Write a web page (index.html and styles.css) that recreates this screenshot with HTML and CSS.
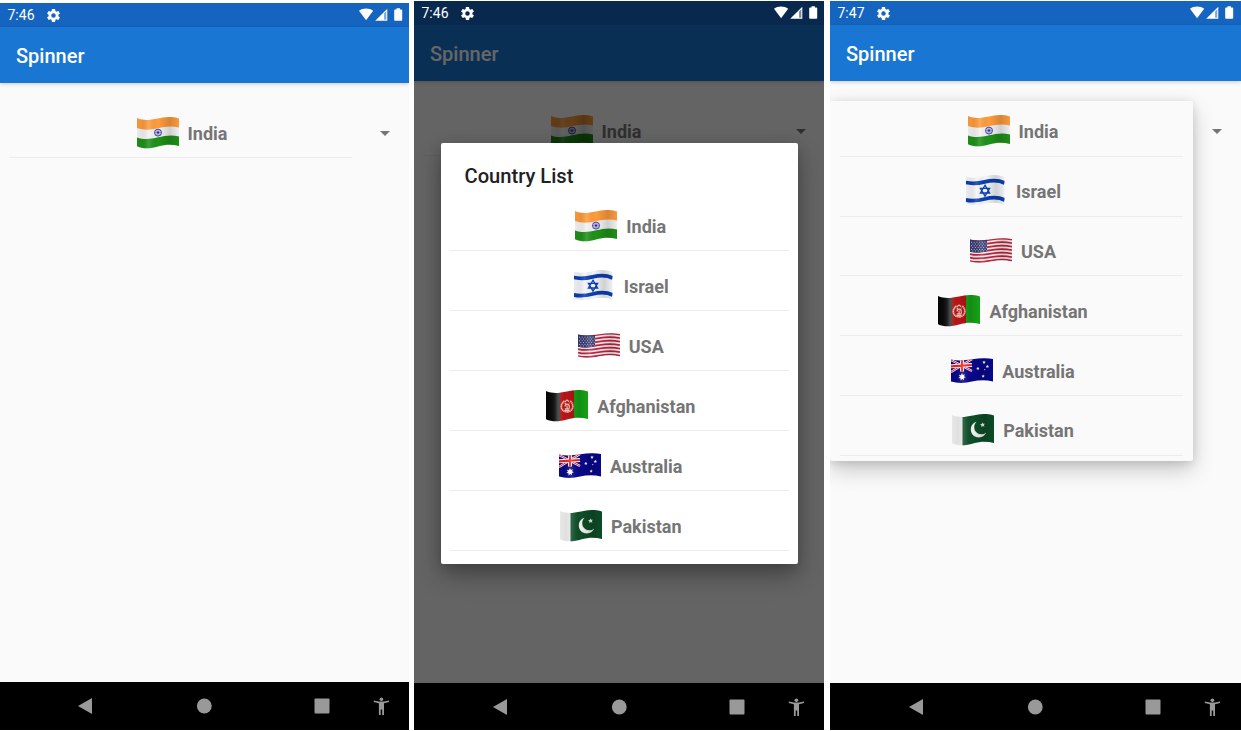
FILE: index.html
```
<!DOCTYPE html>
<html lang="en">
<head>
<meta charset="utf-8">
<title>Spinner</title>
<link rel="stylesheet" href="styles.css">
</head>
<body>
<svg class="defs" width="0" height="0" aria-hidden="true">
  <defs>
    <linearGradient id="shade" x1="0" x2="1" y1="0" y2="0">
      <stop offset="0" stop-color="#000" stop-opacity=".04"/>
      <stop offset=".13" stop-color="#000" stop-opacity=".07"/>
      <stop offset=".28" stop-color="#fff" stop-opacity=".14"/>
      <stop offset=".5" stop-color="#000" stop-opacity="0"/>
      <stop offset=".78" stop-color="#000" stop-opacity=".15"/>
      <stop offset="1" stop-color="#000" stop-opacity=".02"/>
    </linearGradient>
    <linearGradient id="black" x1="0" x2="1" y1="0" y2="0">
      <stop offset="0" stop-color="#050505"/><stop offset=".65" stop-color="#111"/><stop offset="1" stop-color="#444"/>
    </linearGradient>
    <clipPath id="wave"><path d="M0 1C7 4 13 3 21 1.4S36-.8 42 1.4V29C35 27 28 27.5 21 29.4S7 32.4 0 29.2Z"/></clipPath>
    <clipPath id="wave-il"><path d="M0 1.5C7 3.600 13 2.800 19 1.300S33-.8 39 2.600V30C32 27 26 27.5 19 29S6 30.500 0 28.5Z"/></clipPath>
    <clipPath id="wave-us"><path d="M0 1.6C7 3 13 2.600 21 1.300S36-.2 42 1V23.500C35 21.800 28 22 21 23.600S7 25.500 0 23.500Z"/></clipPath>
  </defs>
  <symbol id="in" viewBox="0 0 42 32"><g clip-path="url(#wave)">
    <path fill="#f3f3f3" d="M0 0H42V32H0Z"/>
    <path fill="#ff9c3d" d="M0-2H42V10.500C35 8.500 28 9.500 21 11.200S7 13.500 0 11Z"/>
    <path fill="#1f9118" d="M0 20.500C7 23 14 22 21 20.300S35 17.500 42 19.500V33H0Z"/>
    <circle cx="21" cy="15.600" r="3.500" fill="#e4e4f2" stroke="#34349a" stroke-width=".9"/>
    <path stroke="#34349a" stroke-width=".5" d="M21 12v7.200M17.500 15.600h7M18.500 13.100l5 5M23.500 13.100l-5 5"/>
    <circle cx="21" cy="15.600" r="1" fill="#26268f"/>
    <path fill="url(#shade)" d="M0 0H42V32H0Z"/></g></symbol>
  <symbol id="il" viewBox="-.7 0 42 32"><g clip-path="url(#wave-il)">
    <path fill="#f4f5f8" d="M0 0H42V32H0Z"/>
    <g fill="none" stroke="#0a3fb0"><path stroke-width="3.800" d="M0 7.500C7 9 13 8.300 19 6.800S33 4.800 39 8"/>
    <path stroke-width="3.800" d="M0 24.800C7 26.500 13 25.500 19 24S33 22 39 25"/>
    <path stroke-width="1.300" d="M19.300 10.200l4.600 7.800h-9.200ZM19.300 21.200l-4.600-7.900h9.200Z"/></g>
    <path fill="url(#shade)" d="M0 0H39V32H0Z"/></g></symbol>
  <symbol id="us" viewBox="0 0 42 26"><g clip-path="url(#wave-us)">
    <path fill="#f6eeee" d="M0 0H42V26H0Z"/>
    <g fill="none" stroke="#bd2540" stroke-width="1.700">
      <path d="M0 2C7 4 13 3 21 1.600S36 .3 42 1.600"/><path d="M0 5.500C7 7.500 13 6.500 21 5.100S36 3.800 42 5.100"/>
      <path d="M0 9C7 11 13 10 21 8.600S36 7.300 42 8.600"/><path d="M0 12.500C7 14.500 13 13.500 21 12.100S36 10.800 42 12.100"/>
      <path d="M0 16C7 18 13 17 21 15.600S36 14.300 42 15.600"/><path d="M0 19.500C7 21.500 13 20.500 21 19.100S36 17.800 42 19.100"/>
      <path d="M0 23C7 25 13 24 21 22.600S36 21.300 42 22.600"/></g>
    <path fill="#34376f" d="M0 0H17V13.600C11 15 6 15 0 13.800Z"/>
    <g stroke="#c5c7df" stroke-width="1" stroke-dasharray="1 1.700" fill="none"><path d="M1 4.200H17M2.300 6H17M1 7.800H17M2.300 9.600H17M1 11.400H17M2.300 13H17"/></g>
    <path fill="url(#shade)" d="M0 0H42V32H0Z"/></g></symbol>
  <symbol id="af" viewBox="0 0 42 32"><g clip-path="url(#wave)">
    <path fill="url(#black)" d="M0 0H14V32H0Z"/><path fill="#b51515" d="M14 0H28V32H14Z"/><path fill="#16a516" d="M28 0H42V32H28Z"/>
    <g fill="none" stroke="#efbdb2"><path stroke-width="1.700" stroke-dasharray="1.600 .3" d="M18.500 11C13 15 15 21.700 21 21.800S29 15 24 10.600"/>
    <path stroke-width="1.200" d="M18.800 18.800h4.600M19 16.600c0-3.400 4.300-3.400 4.300 0v2M21.100 15.500v3M19 11.800l2-1.700 2 1.400M18.800 20.300h4.800M18.600 13.300h1.500M22.800 13h1"/></g>
    <path fill="url(#shade)" d="M0 0H42V32H0Z"/></g></symbol>
  <symbol id="au" viewBox="0 0 42 26"><g clip-path="url(#wave-us)">
    <path fill="#08088c" d="M0 0H42V26H0Z"/>
    <path stroke="#fff" stroke-width="2.200" d="M0 2L21 13M0 14L21 1"/><path stroke="#e8283a" stroke-width="1" d="M0 2L21 13M0 14L21 1"/>
    <path stroke="#fff" stroke-width="4" d="M11 0V13.500M0 8.300L21 7"/><path stroke="#ef2525" stroke-width="2.200" d="M11 0V13.500M0 8.300L21 7"/>
    <g fill="#fff"><path d="M11 15l.8 2.100 2.100-.9-.9 2 1.900 1.100-2.100.6.300 2.200-1.900-1.200-1.600 1.500-.1-2.200-2.200-.1 1.700-1.400-1.200-1.900 2.100.4Z"/>
    <path d="M33 2.600l.5 1 1.200.2-.9.900.1 1.100-1-.6-1 .6.200-1.200-.8-.8 1.200-.2ZM27 8.800l.4 1 1.100.2-.8.800.1 1.100-1-.6-1 .6.200-1.200-.8-.7 1.200-.2ZM36.500 6.800l.4 1 1.100.2-.8.800.1 1.100-1-.6-1 .6.200-1.200-.8-.7 1.200-.2ZM32.300 16.500l.4 1 1.100.2-.8.800.1 1.100-1-.6-1 .6.200-1.200-.8-.7 1.200-.2Z"/><circle cx="33.800" cy="11.600" r=".6"/></g>
    <path fill="url(#shade)" d="M0 0H42V32H0Z"/></g></symbol>
  <symbol id="pk" viewBox="0 0 42 32"><g clip-path="url(#wave)">
    <path fill="#f1f1f1" d="M0 0H10.500V32H0Z"/><path fill="#0d4d27" d="M10.500 0H42V32H10.500Z"/>
    <path fill="#eef1ee" d="M24.500 7.800a8 8 0 1 0 9.700 10.600a6.800 6.800 0 1 1-9.700-10.600Z"/>
    <path fill="#eef1ee" d="M30.500 8.300l.7 1.500 1.800-.1-1.200 1.400.7 1.600-1.700-.6-1.400 1.100.1-1.800-1.500-1 1.800-.5Z"/>
    <path fill="url(#shade)" d="M0 0H42V32H0Z"/></g></symbol>
  <symbol id="gear" viewBox="2 2 20 20"><path fill="#fff" d="M19.430 12.980c.04-.32.070-.64.070-.98s-.03-.66-.07-.98l2.110-1.650c.19-.15.240-.42.120-.64l-2-3.460c-.12-.22-.39-.3-.61-.22l-2.490 1c-.52-.4-1.080-.73-1.690-.98l-.38-2.650A.49.49 0 0 0 14 2h-4c-.25 0-.46.180-.49.420l-.38 2.650c-.61.250-1.170.590-1.690.980l-2.490-1c-.23-.09-.49 0-.61.220l-2 3.460c-.13.220-.07.490.120.640l2.110 1.650c-.04.320-.07.650-.07.980s.03.660.070.980l-2.110 1.650c-.19.150-.24.420-.12.640l2 3.460c.12.220.39.300.61.220l2.490-1c.52.400 1.080.730 1.690.980l.38 2.650c.03.240.240.420.490.420h4c.25 0 .46-.18.490-.42l.38-2.650c.61-.25 1.170-.59 1.690-.98l2.490 1c.23.090.490 0 .61-.22l2-3.460c.12-.22.070-.49-.12-.64ZM12 15.500a3.500 3.500 0 1 1 0-7 3.500 3.500 0 0 1 0 7Z"/></symbol>
  <symbol id="signals" viewBox="0 0 44 14"><g fill="#fff"><path d="M0 2.800C4 -.2 10.200 -.2 14.200 2.800L7.100 12.200Z"/>
    <path fill-rule="evenodd" d="M28.300 .7V12.800H16.200ZM25.200 5.600V11.600H27.200V3.600Z"/><path opacity=".45" d="M25.200 5.600L27.200 3.600V11.600H25.200Z"/>
    <path d="M35.200 2.200a.8.800 0 0 1 .8-.8h1.500V.2h3.400v1.200h1.500a.8.800 0 0 1 .8.800v9.800a.8.800 0 0 1-.8.800H36a.8.800 0 0 1-.8-.8Z"/></g></symbol>
  <symbol id="keys" viewBox="0 0 410 48"><g fill="#999"><path d="M92 16V32L78 24.100Z"/><circle cx="204.300" cy="24" r="7.400"/><rect x="314.500" y="16.500" width="15" height="15" rx="1"/>
    <circle cx="381.400" cy="17.200" r="1.800"/><path d="M373.800 18.400L379 19.600H384L389 18.400V20L384 21.200V33H382.200V27.500H380.700V33H378.900V21.200L373.800 20Z"/></g></symbol>
</svg>

<main class="screens">
  <section class="phone first">
    <header class="status"><span>7:46</span><svg class="gear"><use href="#gear"/></svg><svg class="signals"><use href="#signals"/></svg></header>
    <div class="toolbar">Spinner</div>
    <div class="content">
      <div class="spinner"><div class="row"><svg class="flag"><use href="#in"/></svg><span>India</span></div><i class="arrow"></i></div>
    </div>
    <nav class="nav"><svg><use href="#keys"/></svg></nav>
  </section>

  <section class="phone dimmed">
    <header class="status"><span>7:46</span><svg class="gear"><use href="#gear"/></svg><svg class="signals"><use href="#signals"/></svg></header>
    <div class="toolbar">Spinner</div>
    <div class="content">
      <div class="spinner"><div class="row"><svg class="flag"><use href="#in"/></svg><span>India</span></div><i class="arrow"></i></div>
    </div>
    <nav class="nav"><svg><use href="#keys"/></svg></nav>
    <div class="scrim"></div>
    <div class="dialog">
      <h2>Country List</h2>
      <div class="row"><svg class="flag"><use href="#in"/></svg><span>India</span></div>
      <div class="row"><svg class="flag"><use href="#il"/></svg><span>Israel</span></div>
      <div class="row"><svg class="flag short"><use href="#us"/></svg><span>USA</span></div>
      <div class="row"><svg class="flag"><use href="#af"/></svg><span>Afghanistan</span></div>
      <div class="row"><svg class="flag short"><use href="#au"/></svg><span>Australia</span></div>
      <div class="row"><svg class="flag"><use href="#pk"/></svg><span>Pakistan</span></div>
    </div>
  </section>

  <section class="phone">
    <header class="status"><span>7:47</span><svg class="gear"><use href="#gear"/></svg><svg class="signals"><use href="#signals"/></svg></header>
    <div class="toolbar">Spinner</div>
    <div class="content"><div class="spinner"><div class="row"></div><i class="arrow"></i></div></div>
    <nav class="nav"><svg><use href="#keys"/></svg></nav>
    <div class="dropdown">
      <div class="row"><svg class="flag"><use href="#in"/></svg><span>India</span></div>
      <div class="row"><svg class="flag"><use href="#il"/></svg><span>Israel</span></div>
      <div class="row"><svg class="flag short"><use href="#us"/></svg><span>USA</span></div>
      <div class="row"><svg class="flag"><use href="#af"/></svg><span>Afghanistan</span></div>
      <div class="row"><svg class="flag short"><use href="#au"/></svg><span>Australia</span></div>
      <div class="row"><svg class="flag"><use href="#pk"/></svg><span>Pakistan</span></div>
    </div>
  </section>
</main>
</body>
</html>
```
FILE: styles.css
```
* { box-sizing: border-box; }
body { margin: 0; background: #fff; font-family: Roboto, sans-serif; overflow: hidden; }
svg { display: block; flex: none; }
.defs { position: absolute; }
.screens { display: grid; grid-template-columns: 409px 410px 410.5px; column-gap: 5.5px; height: 730px; padding-top: 1px; }
.phone { position: relative; display: flex; flex-direction: column; height: 729px; background: #fafafa; overflow: hidden; }
.phone.first { margin-top: 2px; height: 727px; }
.phone.dimmed { margin-left: -.5px; margin-right: .5px; }
.status { height: 24px; flex: none; display: flex; align-items: center; padding: 0 6.5px 0 7.5px; background: #1565c0; color: #fff; font-size: 14px; }
.status span { width: 39px; }
.gear { width: 13px; height: 13px; }
.signals { width: 44px; height: 14px; margin-left: auto; }
.toolbar { height: 56px; flex: none; display: flex; align-items: center; padding: 2px 16px 0; background: #1976d2; color: #fff; font-size: 20px; font-weight: 500; box-shadow: 0 1px 4px rgba(0,0,0,.2); }
.first .toolbar { padding-top: 1px; }
.content { flex: 1; padding: 16px 0 0 9px; }
.spinner { display: flex; align-items: center; width: 400px; }
.spinner .row { width: 343px; height: 59px; padding-top: 10px; }
.arrow { margin-left: 28px; margin-top: 10px; border: 5px solid transparent; border-top-color: #757575; border-bottom: 0; }
.phone:not(.first) .arrow { margin-left: 30px; }
.row { height: 60px; display: flex; align-items: center; justify-content: center; gap: 9px; padding: 11px 0 0 3px; border-bottom: 1px solid #ececec; color: #757575; font-size: 18px; font-weight: 700; line-height: 24px; }
.row span { padding-top: 2px; }
.flag { width: 42px; height: 32px; }
.flag.short { height: 26px; }
.nav { height: 47px; flex: none; background: #000; }
.first .nav { height: 48px; }
.nav svg { width: 410px; height: 48px; }
.phone:not(.first) .nav { padding-left: 1px; }
.scrim { position: absolute; inset: 0; background: rgba(0,0,0,.6); z-index: 1; }
.dimmed .status, .dimmed .nav { position: relative; z-index: 2; }
.dimmed .status { background: #08284d; }
.dialog { position: absolute; z-index: 3; left: 26.500px; top: 142px; width: 357.500px; height: 420.5px; padding: 20px 9.500px 0; background: #fff; border-radius: 2px; box-shadow: 0 12px 24px rgba(0,0,0,.28), 0 4px 14px rgba(0,0,0,.16); }
.dialog h2 { margin: 0; height: 28px; padding-left: 14.5px; color: #212121; font-size: 20.15px; line-height: 26px; font-weight: 500; }
.dropdown { position: absolute; left: 0; top: 100px; width: 363px; height: 360px; padding: 0 10px; background: #fafafa; border-radius: 2px; box-shadow: 0 9px 22px rgba(0,0,0,.2), 0 2px 10px rgba(0,0,0,.12); }
.dropdown .row { height: 59.85px; padding-top: 10px; }
.dropdown .row:first-child { height: 55.700px; padding-top: 6px; }
```
